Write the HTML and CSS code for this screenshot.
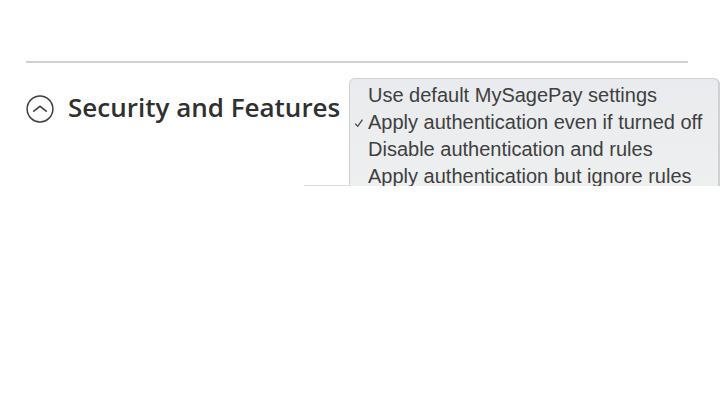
FILE: index.html
```
<!DOCTYPE html>
<html lang="en">
<head>
    <meta charset="UTF-8">
    <meta name="viewport" content="width=device-width, initial-scale=1.0">
    <title>Security and Features</title>
    <link rel="stylesheet" href="styles.css">
</head>
<body>
    <main class="config">
        <section class="config-section">
            <h2 class="section-title">
                <button type="button" class="section-toggle" aria-expanded="true">
                    <svg class="toggle-icon" viewBox="0 0 28 28" aria-hidden="true">
                        <circle cx="14" cy="14" r="12.9"/>
                        <path d="M7.2 16.7 L14 11.3 L20.8 16.7"/>
                    </svg>
                    Security and Features
                </button>
            </h2>
            <div class="field-box"></div>
            <div class="menu" role="listbox" aria-label="3D Secure">
                <button type="button" class="menu-item" role="option" aria-selected="false">Use default MySagePay settings</button>
                <button type="button" class="menu-item" role="option" aria-selected="true">
                    <svg class="check" viewBox="0 0 10 10" aria-hidden="true">
                        <path d="M1.2 5.6 L3.7 8.3 L8.5 1.7"/>
                    </svg>
                    Apply authentication even if turned off
                </button>
                <button type="button" class="menu-item" role="option" aria-selected="false">Disable authentication and rules</button>
                <button type="button" class="menu-item" role="option" aria-selected="false">Apply authentication but ignore rules</button>
            </div>
        </section>
    </main>
</body>
</html>
```
FILE: styles.css
```
body {
    margin: 0;
    background-color: #ffffff;
    font-family: "Open Sans", sans-serif;
}

.config {
    padding: 61px 40px 0 26px;
    overflow: hidden;
}

.config-section {
    position: relative;
    border-top: 2px solid #d0d0d0;
    padding-top: 26px;
}

.section-title {
    margin: 0;
}

.section-toggle {
    display: flex;
    align-items: center;
    gap: 14px;
    padding: 0;
    border: none;
    background: none;
    color: #303030;
    font-family: "Open Sans", sans-serif;
    font-size: 26px;
    font-weight: 600;
    line-height: 36px;
    white-space: nowrap;
    cursor: pointer;
}

.toggle-icon {
    width: 28px;
    height: 28px;
    margin-top: 4px;
    fill: none;
    stroke: #404040;
    stroke-width: 1.5;
}

.field-box {
    height: 1px;
    margin: 60px 0 0 278px;
    background-color: #dcdcdc;
}

/* Open drop-down, lies over the field */
.menu {
    position: absolute;
    top: 15px;
    right: -32px;
    bottom: 0;
    left: 323px;
    box-sizing: border-box;
    padding-top: 3px;
    overflow: hidden;
    border: 1px solid #d0d1d2;
    border-right-width: 2px;
    border-bottom: none;
    border-radius: 6px 6px 0 0;
    background: linear-gradient(#e9ebee, #eeefef);
}

.menu-item {
    position: relative;
    display: block;
    width: 100%;
    padding: 0 0 0 18px;
    border: none;
    background: none;
    color: #3e3f41;
    font-family: "Liberation Sans", Arial, sans-serif;
    font-size: 20px;
    line-height: 27px;
    text-align: left;
    white-space: nowrap;
}

.check {
    position: absolute;
    top: 9px;
    left: 4px;
    width: 10px;
    height: 10px;
    fill: none;
    stroke: #3e3f41;
    stroke-width: 1.2;
}
```
